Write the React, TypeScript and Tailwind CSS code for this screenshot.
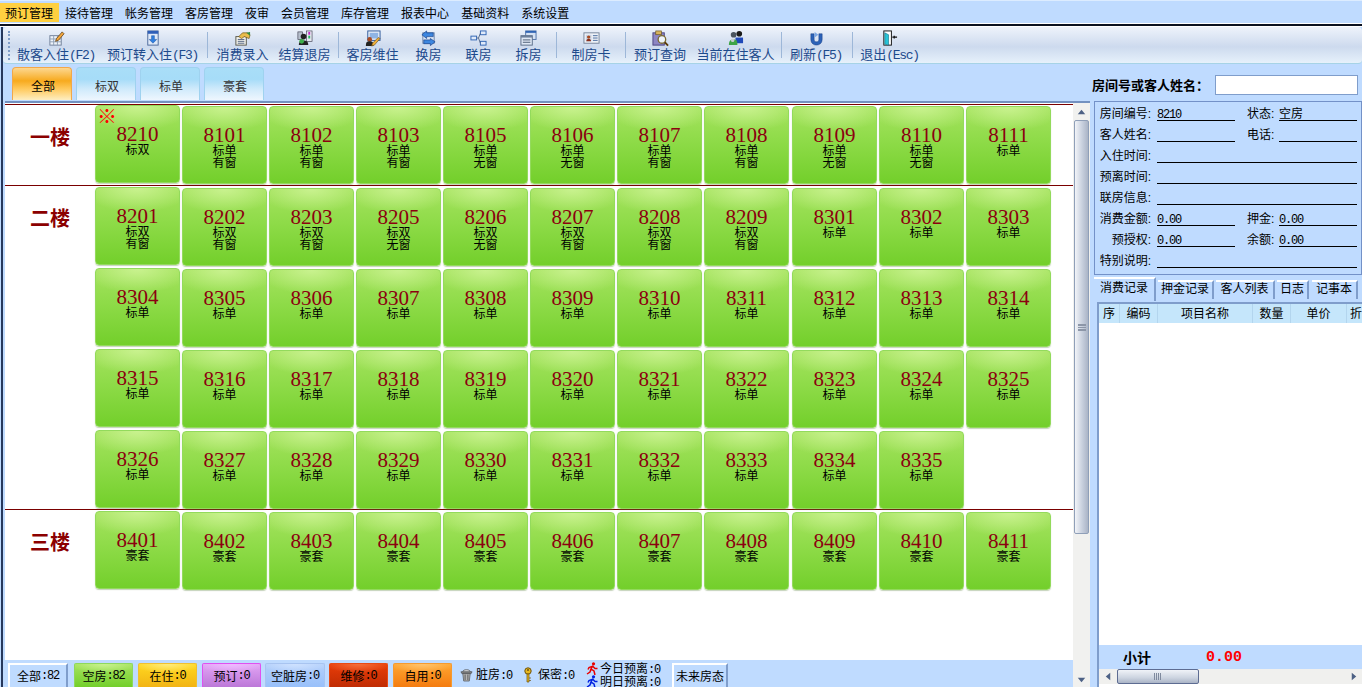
const menus = ["接待管理", "帐务管理", "客房管理", "夜审", "会员管理", "库存管理", "报表中心", "基础资料", "系统设置"];

const Mono = ({ children }: { children: React.ReactNode }) => (
  <span className="font-['Liberation_Mono',monospace] tracking-[-0.1em]">{children}</span>
);

const icons: Record<string, React.ReactNode> = {
  sheet: (
    <>
      <rect x="2" y="6" width="12" height="10" fill="#eef3fa" stroke="#6f7f98" />
      <path d="M2 9.500h12M2 12.500h12M6 6v10M10 6v10" stroke="#8f9fb6" />
      <path d="M9 9l6-7 2 2-6 7-3 1z" fill="#f2a63c" stroke="#5b3c14" strokeWidth=".8" />
    </>
  ),
  download: (
    <>
      <rect x="4" y="1" width="11" height="15" fill="#dfe9f8" stroke="#4a689a" />
      <rect x="4" y="1" width="11" height="3" fill="#2f5fb8" />
      <path d="M8 6h3v4h2.500l-4 4-4-4H8z" fill="#2f7fe0" stroke="#1c4f9a" strokeWidth=".5" />
    </>
  ),
  hand: (
    <>
      <rect x="2" y="7" width="11" height="9" fill="#f4f4ee" stroke="#55554a" />
      <path d="M4 10h7M4 12h7M4 14h7" stroke="#4f6080" />
      <path d="M5 7l4-4h5l3 2-1 4-5-2-3 2z" fill="#e8bc4c" stroke="#6a5018" strokeWidth=".7" />
      <path d="M13 3l4-1v4z" fill="#2f8c3c" />
    </>
  ),
  checkout: (
    <>
      <rect x="2" y="2" width="5" height="8" fill="#b6bfcd" stroke="#445" strokeWidth=".7" />
      <rect x="11" y="1" width="6" height="11" fill="#e6e8f0" stroke="#445" strokeWidth=".7" />
      <rect x="13" y="2" width="2" height="3" fill="#c02ac8" />
      <rect x="13" y="6" width="2" height="3" fill="#28b860" />
      <circle cx="8" cy="7" r="3" fill="#222" />
      <path d="M3 16c0-4 2-5 5-5s5 1 5 5z" fill="#222" />
      <circle cx="6" cy="12" r="2.500" fill="#3fae4a" />
    </>
  ),
  card: (
    <>
      <rect x="4" y="1" width="13" height="10" fill="#e4ecf7" stroke="#2f5a9c" />
      <rect x="6" y="3" width="9" height="6" fill="#8fb4e4" />
      <circle cx="6" cy="10" r="2.500" fill="#a84a22" />
      <path d="M2 17c0-4 1-5 4-5s4 1 4 5z" fill="#222" />
      <path d="M9 14l6-6 2 1-6 7-3 1z" fill="#f0b03a" stroke="#604410" strokeWidth=".6" />
    </>
  ),
  swap: (
    <>
      <rect x="3" y="3" width="12" height="11" fill="#dbe6f5" stroke="#6a84ac" />
      <path d="M7 1L2 5l5 4V7h7V3H7z" fill="#3d87e0" stroke="#173f88" strokeWidth=".7" />
      <path d="M11 9l5 3.500-5 4v-2H4v-4h7z" fill="#3d87e0" stroke="#173f88" strokeWidth=".7" />
    </>
  ),
  link: (
    <>
      <rect x="11" y="1" width="6" height="4" fill="#dfeafa" stroke="#2f64b4" />
      <rect x="1" y="6.500" width="6" height="4" fill="#dfeafa" stroke="#2f64b4" />
      <rect x="11" y="12" width="6" height="4" fill="#dfeafa" stroke="#2f64b4" />
      <path d="M7 8.500h2l2-5M9 8.500l2 5.500" stroke="#55698a" fill="none" />
    </>
  ),
  split: (
    <>
      <rect x="6" y="1" width="11" height="9" fill="#d5e2f4" stroke="#4f72a8" />
      <rect x="6" y="1" width="11" height="2" fill="#2f64b4" />
      <rect x="1" y="6" width="12" height="10" fill="#dfe8f5" stroke="#5a6c88" />
      <rect x="1" y="6" width="12" height="2" fill="#6a7e9a" />
      <path d="M3 10.500h8M3 13h8" stroke="#46566e" />
    </>
  ),
  idcard: (
    <>
      <rect x="1" y="3" width="16" height="11" fill="#eef2f8" stroke="#76849a" />
      <rect x="3" y="5" width="6" height="7" fill="#c9d4e4" />
      <circle cx="6" cy="7.500" r="1.800" fill="#a84a22" />
      <path d="M3.500 12c0-2 1-2.500 2.500-2.500s2.500.5 2.500 2.500z" fill="#8c2f1c" />
      <path d="M10.500 6h5M10.500 8.500h5M10.500 11h5" stroke="#46699c" />
    </>
  ),
  search: (
    <>
      <rect x="1" y="3" width="12" height="13" fill="#8d86c4" stroke="#4a4480" />
      <rect x="4" y="1" width="6" height="4" fill="#d8b45c" stroke="#665020" strokeWidth=".7" />
      <circle cx="10.500" cy="10" r="4" fill="#eef4fa" stroke="#7a6a30" strokeWidth="1.400" />
      <path d="M13.500 13l3.500 3.500" stroke="#5b3c08" strokeWidth="2" />
    </>
  ),
  people: (
    <>
      <circle cx="7" cy="5" r="3" fill="#4a545f" />
      <circle cx="13" cy="4" r="3" fill="#1a1a1a" />
      <path d="M9 8h8v6H9z" fill="#1f48b8" />
      <path d="M2 16c0-5 2-6 5-6s4 1 4 6z" fill="#3fa446" />
      <circle cx="6" cy="11" r="1.800" fill="#c8ccd2" />
    </>
  ),
  refresh: (
    <>
      <path d="M3 4v6c0 4 3 6 6 6s6-2 6-6V4h-3.500v6c0 1.500-1 2.500-2.500 2.500S6.500 11.500 6.500 10V4z" fill="#2b62b8" stroke="#173c80" strokeWidth=".5" />
      <path d="M7 2l4 3-4 3z" fill="#7ba7e4" />
    </>
  ),
  door: (
    <>
      <rect x="3" y="1" width="8" height="15" fill="#fff" stroke="#111" />
      <path d="M4 3l4 2v11l-4-1z" fill="#27c4d8" stroke="#0b6a80" strokeWidth=".6" />
      <path d="M12 7.500h3M14 6v3M15 7.500h2" stroke="#111" strokeWidth="1.300" fill="none" />
    </>
  ),
};

const tools = [
  { label: "散客入住", key: "(F2)", icon: "sheet", w: "w-[90px]" },
  { label: "预订转入住", key: "(F3)", icon: "download", w: "w-[103px]" },
  { sep: "mx-[3px]" },
  { label: "消费录入", icon: "hand", w: "w-[63px]" },
  { label: "结算退房", icon: "checkout", w: "w-[61px]" },
  { sep: "mx-[3px]" },
  { label: "客房维住", icon: "card", w: "w-[61px]" },
  { label: "换房", icon: "swap", w: "w-[51px]" },
  { label: "联房", icon: "link", w: "w-[49px]" },
  { label: "拆房", icon: "split", w: "w-[51px]" },
  { sep: "mx-[2px]" },
  { label: "制房卡", icon: "idcard", w: "w-[64px]" },
  { sep: "mx-[2px]" },
  { label: "预订查询", icon: "search", w: "w-[64px]" },
  { label: "当前在住客人", icon: "people", w: "w-[87px]" },
  { sep: "mx-[2px]" },
  { label: "刷新", key: "(F5)", icon: "refresh", w: "w-[64px]" },
  { sep: "mx-[4px]" },
  { label: "退出", key: "(Esc)", icon: "door", w: "w-[65px]" },
];

type Room = [string, string, string?];

const nums = (from: number, to: number, a: string): Room[] => {
  const out: Room[] = [];
  for (let n = from; n <= to; n++) out.push([String(n), a]);
  return out;
};

const floors: { name: string; rooms: Room[] }[] = [
  {
    name: "一楼",
    rooms: [
      ["8210", "标双"],
      ["8101", "标单", "有窗"],
      ["8102", "标单", "有窗"],
      ["8103", "标单", "有窗"],
      ["8105", "标单", "无窗"],
      ["8106", "标单", "无窗"],
      ["8107", "标单", "有窗"],
      ["8108", "标单", "有窗"],
      ["8109", "标单", "无窗"],
      ["8110", "标单", "无窗"],
      ["8111", "标单"],
    ],
  },
  {
    name: "二楼",
    rooms: [
      ["8201", "标双", "有窗"],
      ["8202", "标双", "有窗"],
      ["8203", "标双", "有窗"],
      ["8205", "标双", "无窗"],
      ["8206", "标双", "无窗"],
      ["8207", "标双", "有窗"],
      ["8208", "标双", "有窗"],
      ["8209", "标双", "有窗"],
      ...nums(8301, 8303, "标单"),
      ...nums(8304, 8335, "标单"),
    ],
  },
  { name: "三楼", rooms: nums(8401, 8411, "豪套") },
];

function RoomCell({ room, col, marked }: { room: Room; col: number; marked: boolean }) {
  return (
    <div
      className={`relative flex h-[78px] w-[85px] flex-col items-center rounded-[4px] border border-[#93da5c] bg-[radial-gradient(ellipse_65%_32%_at_50%_0%,#c9f28f_0%,rgba(201,242,143,0)_100%),linear-gradient(180deg,#a5e35f_0%,#8edb48_45%,#73cf2b_100%)] pt-[17px] shadow-[0_1px_1px_rgba(90,130,60,0.35)] ${col === 0 ? "" : "mt-px"}`}
    >
      {marked && (
        <span className="absolute left-[1px] top-[-2px] text-[20px] leading-[24px] text-[#ff0000]">※</span>
      )}
      <div className="h-[20px] font-['Liberation_Serif',serif] text-[21px] leading-[22px] text-[#8b0010]">{room[0]}</div>
      <div className="h-[12px] text-[12px] leading-[12px] text-black">{room[1]}</div>
      {room[2] && <div className="h-[12px] text-[12px] leading-[12px] text-black">{room[2]}</div>}
    </div>
  );
}

function Floor({ name, rooms, index }: { name: string; rooms: Room[]; index: number }) {
  return (
    <div className={`flex border-t border-[#7a0000] ${index === 0 ? "pb-px" : "pt-px"}`}>
      <div className={`w-[90px] text-center text-[20px] font-bold leading-[24px] text-[#8b0000] ${index === 0 ? "pt-[20px]" : "pt-[19px]"}`}>{name}</div>
      <div className="grid grid-cols-[repeat(7,85px)_86px_repeat(3,85px)] gap-x-[2px] gap-y-[2px]">
        {rooms.map((room, i) => (
          <RoomCell key={room[0]} room={room} col={i % 11} marked={room[0] === "8210"} />
        ))}
      </div>
    </div>
  );
}

function Triangle({ dir }: { dir: "up" | "down" | "left" | "right" }) {
  const pts = { up: "0,7 5,1 10,7", down: "0,1 10,1 5,7", left: "7,0 7,10 1,5", right: "1,0 7,5 1,10" }[dir];
  const box = dir === "up" || dir === "down" ? "0 0 10 8" : "0 0 8 10";
  return (
    <svg viewBox={box} className={dir === "up" || dir === "down" ? "h-[6px] w-[9px]" : "h-[9px] w-[6px]"}>
      <polygon points={pts} fill="#4d6185" />
    </svg>
  );
}

const Colon = () => <span className="font-['Liberation_Sans',sans-serif]">:</span>;

function InfoLine({ label, value, w = "w-[78px]" }: { label: string; value?: React.ReactNode; w?: string }) {
  return (
    <>
      <div className="h-[19px] w-[56px] shrink-0 text-right leading-[21px]">
        {label}
        <Colon />
      </div>
      <div className={`ml-[6px] h-[19px] border-b border-black leading-[21px] ${w}`}>{value}</div>
    </>
  );
}

function InfoRight({ label, value }: { label: string; value?: React.ReactNode }) {
  return (
    <div className="ml-[12px] flex">
      <div className="h-[19px] w-[28px] text-left leading-[21px]">
        {label}
        <Colon />
      </div>
      <div className="ml-[4px] h-[19px] w-[78px] border-b border-black leading-[21px]">{value}</div>
    </div>
  );
}

const chipBase = "flex h-[24px] items-center justify-center rounded-t-[2px] border-x border-t text-[12px] text-black";

const chips = [
  { label: "空房", n: "82", cls: "ml-[6px] w-[59px] border-[#8fd85c] bg-[radial-gradient(ellipse_60%_40%_at_50%_0%,#c9f28f_0%,rgba(201,242,143,0)_100%),linear-gradient(180deg,#a5e35f_0%,#73cf2b_100%)]" },
  { label: "在住", n: "0", cls: "ml-[5px] w-[59px] border-[#f0c030] bg-[radial-gradient(ellipse_60%_40%_at_50%_0%,#ffec80_0%,rgba(255,236,128,0)_100%),linear-gradient(180deg,#ffd820_0%,#f2b414_100%)]" },
  { label: "预订", n: "0", cls: "ml-[5px] w-[59px] border-[#e050f0] bg-[radial-gradient(ellipse_60%_40%_at_50%_0%,#eebcff_0%,rgba(238,188,255,0)_100%),linear-gradient(180deg,#e2a4f5_0%,#bc78d8_100%)]" },
  { label: "空脏房", n: "0", cls: "ml-[4px] w-[60px] border-[#a8c4f0] bg-[radial-gradient(ellipse_60%_40%_at_50%_0%,#cfe2ff_0%,rgba(207,226,255,0)_100%),linear-gradient(180deg,#b4d0fb_0%,#98c0fa_100%)]" },
  { label: "维修", n: "0", cls: "ml-[4px] w-[59px] border-[#e84a14] bg-[radial-gradient(ellipse_60%_40%_at_50%_0%,#f4703c_0%,rgba(244,112,60,0)_100%),linear-gradient(180deg,#e83c08_0%,#c02c04_100%)]" },
  { label: "自用", n: "0", cls: "ml-[5px] w-[59px] border-[#f59a30] bg-[radial-gradient(ellipse_60%_40%_at_50%_0%,#ffc470_0%,rgba(255,196,112,0)_100%),linear-gradient(180deg,#ffa530_0%,#f47c10_100%)]" },
];

const Bevel = "flex h-[24px] items-center justify-center border-2 border-b-0 border-l-white border-r-[#7f9dcb] border-t-white bg-[#bfdbff] text-[12px] text-black";

const Runner = ({ color }: { color: string }) => (
  <svg viewBox="0 0 12 13" className="h-[13px] w-[12px]">
    <circle cx="7.500" cy="1.800" r="1.600" fill={color} />
    <path d="M7 3.500L5 7l3 2 1 4M5 7l-1 3-3 2M6 4.500L3 5.500 2 7.500M7 4.500l2 2h2.500" stroke={color} strokeWidth="1.500" fill="none" />
  </svg>
);

const tabs = ["押金记录", "客人列表", "日志", "记事本"];
const tabW = ["ml-[2px] w-[56px]", "ml-[2px] w-[59px]", "ml-[2px] w-[32px]", "ml-[3px] w-[46px]"];
const cols = [
  { t: "序", w: "w-[21px] pl-[4px]" },
  { t: "编码", w: "w-[38px] text-center" },
  { t: "项目名称", w: "w-[95px] text-center" },
  { t: "数量", w: "w-[38px] text-center" },
  { t: "单价", w: "w-[56px] text-center" },
  { t: "折", w: "w-[20px] pl-[3px]" },
];

export default function App() {
  return (
    <div className="flex h-[687px] w-[1362px] flex-col overflow-hidden bg-[#bfdbff] font-['Noto_Sans_CJK_SC',sans-serif] text-[12px] text-black">
      {/* menu */}
      <div className="h-[23px] border-t border-[#dcecff] pt-[2px]">
        <div className="flex h-[19px] items-center leading-[19px]">
          <div className="bg-[#ffd040] pl-[5px] pr-[6px]">预订管理</div>
          {menus.map((m) => (
            <div key={m} className="px-[6px]">{m}</div>
          ))}
        </div>
      </div>
      <div className="h-[4px] border-y border-white bg-[#0b1220]" />

      <div className="ml-px flex flex-1 flex-col border-l-2 border-[#26385c]">
        {/* toolbar */}
        <div className="flex h-[37px] items-stretch rounded-[4px] border-b border-[#a6d3e6] bg-[linear-gradient(180deg,#eef3fb_0%,#cddaee_55%,#e6f1fb_100%)]">
          <div className="ml-[5px] mr-[1px] mt-[4px] h-[29px] w-px border-l-2 border-dotted border-[#7f9dc8]" />
          {tools.map((t, i) =>
            t.sep ? (
              <div key={i} className={`my-[5px] w-px bg-[#9db7d8] ${t.sep}`} />
            ) : (
              <div key={i} className={`flex flex-col items-center pt-[3px] text-[13px] text-[#1d4a8c] ${t.w}`}>
                <svg viewBox="0 0 18 18" className="h-[17px] w-[17px]">{icons[t.icon as string]}</svg>
                <div className="h-[14px] whitespace-nowrap leading-[14px]">
                  {t.label}
                  {t.key && <Mono>{t.key}</Mono>}
                </div>
              </div>
            )
          )}
        </div>

        {/* tabs + search */}
        <div className="flex h-[37px]">
          <div className="ml-[9px] mt-[3px] flex gap-[4px]">
            <div className="h-[33px] w-[60px] rounded-t-[4px] border border-b-0 border-[#f2a84a] bg-[linear-gradient(180deg,#fdd790_0%,#f7aa1e_40%,#ffc95c_65%,#fdeec2_100%)] pl-[2px] pt-[11px] text-center leading-[14px]">全部</div>
            {["标双", "标单", "豪套"].map((t) => (
              <div key={t} className="h-[33px] w-[60px] rounded-t-[4px] border border-b-0 border-[#9fd2ef] bg-[linear-gradient(180deg,#a9def8_0%,#a6dcf8_35%,#cfeafb_65%,#eef6fe_100%)] pl-[2px] pt-[11px] text-center leading-[14px] text-[#333]">{t}</div>
            ))}
          </div>
          <div className="ml-auto mr-[4px] mt-[11px] flex h-[20px] items-center">
            <div className="mr-[6px] text-[13px] font-bold">房间号或客人姓名：</div>
            <div className="h-[20px] w-[143px] border border-[#7f9dcb] bg-white" />
          </div>
        </div>

        {/* body */}
        <div className="flex min-h-0 flex-1">
          <div className="ml-[2px] flex w-[1085px] shrink-0 border-t-2 border-[#7391c0]">
            <div className="flex w-[1068px] flex-col bg-white pt-px">
              <div className="flex-1">
                {floors.map((f, i) => (
                  <Floor key={f.name} name={f.name} rooms={f.rooms} index={i} />
                ))}
              </div>
              <div className="flex h-[27px] items-end bg-[#bfdbff] pl-[3px]">
                <div className={`${Bevel} w-[60px]`}>全部<Mono>:82</Mono></div>
                {chips.map((c) => (
                  <div key={c.label} className={`${chipBase} ${c.cls}`}>
                    {c.label}
                    <Mono>:{c.n}</Mono>
                  </div>
                ))}
                <div className="ml-[8px] flex h-[24px] items-center">
                  <svg viewBox="0 0 14 15" className="h-[14px] w-[13px]">
                    <path d="M1 4h12l-1 2H2z" fill="#8c8c8c" stroke="#333" strokeWidth=".6" />
                    <path d="M3 6h8l-1 8H4z" fill="#b5b5b5" stroke="#444" strokeWidth=".7" />
                    <path d="M3 4c0-3 8-3 8 0z" fill="#d8d8d8" stroke="#444" strokeWidth=".7" />
                    <path d="M5.500 7v6M8.500 7v6" stroke="#555" />
                  </svg>
                  <span className="ml-[3px]">脏房<Mono>:0</Mono></span>
                </div>
                <div className="ml-[12px] flex h-[24px] items-center">
                  <svg viewBox="0 0 8 16" className="h-[16px] w-[8px]">
                    <circle cx="4" cy="4" r="3.200" fill="#e8b820" stroke="#6b5210" />
                    <circle cx="4" cy="3" r="1" fill="#6b5210" />
                    <path d="M3 7h2v8H3zM5 11h2M5 13.500h2" fill="#e8b820" stroke="#6b5210" strokeWidth=".7" />
                  </svg>
                  <span className="ml-[6px]">保密<Mono>:0</Mono></span>
                </div>
                <div className="ml-[12px] flex h-[25px] flex-col justify-center leading-[13px]">
                  <div className="flex h-[13px] items-center"><Runner color="#e80000" /><span className="ml-[2px] pt-px">今日预离<Mono>:0</Mono></span></div>
                  <div className="flex h-[12px] items-center"><Runner color="#0020e0" /><span className="ml-[2px] pt-px">明日预离<Mono>:0</Mono></span></div>
                </div>
                <div className={`${Bevel} ml-[12px] w-[56px]`}>未来房态</div>
              </div>
            </div>

            {/* vertical scrollbar */}
            <div className="flex w-[17px] flex-col items-center bg-[#f1f1ef]">
              <div className="flex h-[17px] items-center justify-center"><Triangle dir="up" /></div>
              <div className="flex h-[414px] w-[15px] items-center justify-center rounded-[2px] border border-[#8f9fb8] bg-[linear-gradient(90deg,#f2f4f8_0%,#c8d0de_55%,#aab4c6_100%)]">
                <div className="h-[7px] w-[8px] border-y-2 border-[#8c96a8] bg-[linear-gradient(180deg,transparent_40%,#8c96a8_40%,#8c96a8_60%,transparent_60%)]" />
              </div>
              <div className="flex-1" />
              <div className="flex h-[14px] items-center justify-center"><Triangle dir="down" /></div>
            </div>
          </div>

          {/* right panel */}
          <div className="ml-[4px] flex min-w-0 flex-1 flex-col overflow-hidden">
            <div className="flex h-[174px] flex-col gap-[2px] border border-[#7391c8]">
              <div className="flex"><InfoLine label="房间编号" value={<Mono>8210</Mono>} /><InfoRight label="状态" value="空房" /></div>
              <div className="flex"><InfoLine label="客人姓名" /><InfoRight label="电话" /></div>
              <div className="flex"><InfoLine label="入住时间" w="w-[200px]" /></div>
              <div className="flex"><InfoLine label="预离时间" w="w-[200px]" /></div>
              <div className="flex"><InfoLine label="联房信息" w="w-[200px]" /></div>
              <div className="flex"><InfoLine label="消费金额" value={<Mono>0.00</Mono>} /><InfoRight label="押金" value={<Mono>0.00</Mono>} /></div>
              <div className="flex"><InfoLine label="预授权" value={<Mono>0.00</Mono>} /><InfoRight label="余额" value={<Mono>0.00</Mono>} /></div>
              <div className="flex"><InfoLine label="特别说明" w="w-[200px]" /></div>
            </div>

            <div className="flex h-[26px] items-start pt-[2px]">
              <div className="h-[24px] w-[62px] border-r-2 border-t-2 border-r-[#7f9dcb] border-t-white text-center leading-[15px]">消费记录</div>
              {tabs.map((t, i) => (
                <div key={t} className={`mt-[3px] h-[19px] border-r-2 border-t-2 border-r-[#7f9dcb] border-t-white text-center leading-[12px] ${tabW[i]}`}>{t}</div>
              ))}
            </div>

            <div className="ml-[3px] mt-[1px] flex min-h-0 flex-1 flex-col border-l-2 border-t-2 border-[#7f9dcb] bg-white pb-[3px]">
              <div className="flex h-[19px] bg-[#c5e6fb] leading-[17px]">
                {cols.map((c) => (
                  <div key={c.t} className={`shrink-0 overflow-hidden border-r border-[#b3d5ee] ${c.w}`}>{c.t}</div>
                ))}
              </div>
              <div className="flex-1" />
              <div className="flex h-[24px] items-center bg-[#bfdbff] pl-[24px] font-bold">
                <span className="w-[83px] text-[14px]">小计</span>
                <span className="pt-[3px] font-['Liberation_Mono',monospace] text-[15px] text-[#ff0000]">0.00</span>
              </div>
              <div className="flex h-[15px] items-center bg-[#f0f0ee] pl-[6px]">
                <Triangle dir="left" />
                <div className="ml-[6px] flex h-[15px] w-[82px] items-center justify-center rounded-[2px] border border-[#5d6c92] bg-[linear-gradient(180deg,#f0f3f8_0%,#ccd4e0_60%,#aab4c6_100%)]">
                  <div className="h-[7px] w-[8px] bg-[repeating-linear-gradient(90deg,#7f8a9e_0px,#7f8a9e_1px,transparent_1px,transparent_2px)]" />
                </div>
                <div className="flex-1" />
                <div className="mr-[5px]"><Triangle dir="right" /></div>
              </div>
            </div>
          </div>
        </div>
      </div>
    </div>
  );
}
